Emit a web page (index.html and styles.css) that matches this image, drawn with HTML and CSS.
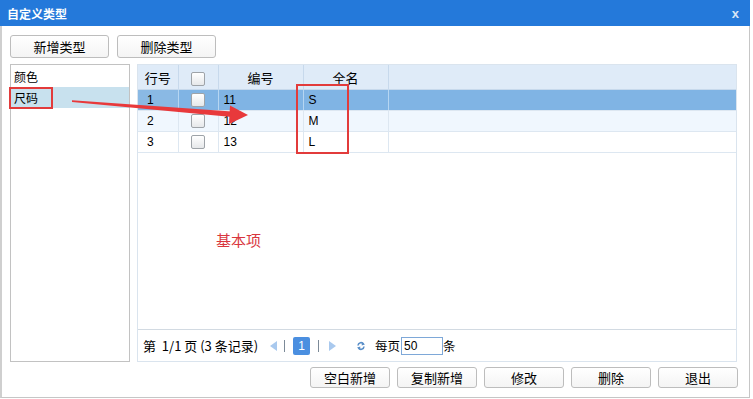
FILE: index.html
```html
<!DOCTYPE html>
<html lang="zh-CN">
<head>
    <meta charset="UTF-8">
    <title>自定义类型</title>
    <link rel="stylesheet" href="styles.css">
</head>
<body>
    <div class="dialog">
        <div class="titlebar">
            <span class="title">自定义类型</span>
            <span class="close">x</span>
        </div>

        <div class="toolbar">
            <button class="btn btn-top">新增类型</button>
            <button class="btn btn-top">删除类型</button>
        </div>

        <div class="main">
            <div class="type-list">
                <div class="type-item">颜色</div>
                <div class="type-item selected">尺码</div>
            </div>

            <div class="grid-panel">
                <div class="grid-body">
                    <table class="grid">
                        <colgroup>
                            <col class="c-no">
                            <col class="c-check">
                            <col class="c-code">
                            <col class="c-name">
                            <col>
                        </colgroup>
                        <thead>
                            <tr>
                                <th>行号</th>
                                <th><span class="check"></span></th>
                                <th>编号</th>
                                <th>全名</th>
                                <th></th>
                            </tr>
                        </thead>
                        <tbody>
                            <tr class="row-selected">
                                <td class="row-no">1</td>
                                <td class="center"><span class="check"></span></td>
                                <td>11</td>
                                <td>S</td>
                                <td></td>
                            </tr>
                            <tr class="row-alt">
                                <td class="row-no">2</td>
                                <td class="center"><span class="check"></span></td>
                                <td>12</td>
                                <td>M</td>
                                <td></td>
                            </tr>
                            <tr>
                                <td class="row-no">3</td>
                                <td class="center"><span class="check"></span></td>
                                <td>13</td>
                                <td>L</td>
                                <td></td>
                            </tr>
                        </tbody>
                    </table>
                </div>

                <div class="pager">
                    <span class="pager-info">第&nbsp; 1/1 页 (3 条记录)</span>
                    <span class="pager-arrow left"></span>
                    <span class="pager-sep"></span>
                    <span class="pager-page">1</span>
                    <span class="pager-sep"></span>
                    <span class="pager-arrow right"></span>
                    <svg class="pager-refresh" width="10" height="10" viewBox="0 0 10 10">
                        <path d="M2 4.5 A3 3 0 0 1 7.6 3.2" fill="none" stroke="#5b8fc8" stroke-width="1.6"/>
                        <path d="M6 1.2 L9 3.4 L5.6 4.6 Z" fill="#5b8fc8"/>
                        <path d="M8 5.5 A3 3 0 0 1 2.4 6.8" fill="none" stroke="#5b8fc8" stroke-width="1.6"/>
                        <path d="M4 8.8 L1 6.6 L4.4 5.4 Z" fill="#5b8fc8"/>
                    </svg>
                    <span class="pager-label">每页</span>
                    <span class="pager-input">50</span>
                    <span class="pager-label">条</span>
                </div>
            </div>
        </div>

        <div class="footer">
            <button class="btn btn-bottom">空白新增</button>
            <button class="btn btn-bottom">复制新增</button>
            <button class="btn btn-bottom">修改</button>
            <button class="btn btn-bottom">删除</button>
            <button class="btn btn-bottom">退出</button>
        </div>

        <!-- annotation layer drawn over the dialog -->
        <svg class="marks" width="750" height="398" viewBox="0 0 750 398">
            <rect x="10" y="88" width="42" height="20" fill="none" stroke="#e23b3b" stroke-width="2"/>
            <rect x="297" y="85" width="51" height="68" fill="none" stroke="#e23b3b" stroke-width="2"/>
            <polygon points="72,100.3 232,111.5 232,117 72,102" fill="#e8393b"/>
            <polygon points="248,115 230,105.5 229,124" fill="#e8393b"/>
        </svg>
        <span class="note">基本项</span>
    </div>
</body>
</html>
```

FILE: styles.css
```css
body {
    margin: 0;
    padding: 0;
    background-color: #ffffff;
    font-family: "Liberation Sans", "Noto Sans CJK SC", sans-serif;
    font-size: 12px;
    color: #000;
}

.dialog {
    position: relative;
    width: 750px;
    height: 398px;
    box-sizing: border-box;
    border: 1px solid #c6c6c6;
    border-top: none;
    border-left: 2px solid #cfcfcf;
    background-color: #fff;
}

.titlebar {
    height: 26px;
    margin-left: -2px;
    margin-right: -1px;
    background-color: #2479da;
    display: flex;
    align-items: center;
    justify-content: space-between;
    padding: 0 11px 0 7px;
    color: #fff;
}

.title {
    font-weight: bold;
    font-size: 12px;
}

.close {
    font-size: 13px;
    color: #d8e6f6;
    font-weight: bold;
}

.btn {
    font-family: "Noto Sans CJK SC", sans-serif;
    font-size: 13px;
    color: #000;
    background: linear-gradient(#ffffff, #f4f4f4);
    border: 1px solid #bdbdbd;
    border-radius: 3px;
    padding: 0;
    margin: 0;
}

.toolbar {
    display: flex;
    gap: 8px;
    padding: 9px 0 0 8px;
}

.btn-top {
    width: 99px;
    height: 23px;
}

.main {
    display: flex;
    gap: 7px;
    margin-top: 6px;
    padding-left: 8px;
}

.type-list {
    width: 120px;
    height: 298px;
    box-sizing: border-box;
    border: 1px solid #c2c2c2;
    padding-top: 1px;
    font-family: "Noto Sans CJK SC", sans-serif;
    font-size: 12px;
}

.type-item {
    height: 21px;
    line-height: 21px;
    padding-left: 3px;
}

.type-item.selected {
    background-color: #c8e1ee;
}

.grid-panel {
    width: 600px;
    height: 298px;
    box-sizing: border-box;
    border: 1px solid #dae4ee;
    display: flex;
    flex-direction: column;
}

.grid-body {
    flex: 1;
}

.grid {
    width: 100%;
    border-collapse: collapse;
    table-layout: fixed;
}

.c-no { width: 40px; }
.c-check { width: 40px; }
.c-code { width: 85px; }
.c-name { width: 85px; }

.grid th {
    height: 24px;
    background-color: #dfebf8;
    font-family: "Noto Sans CJK SC", sans-serif;
    font-weight: normal;
    font-size: 13px;
    border-right: 1px solid #c7d9ec;
    border-bottom: 1px solid #c7d9ec;
    padding: 0;
}

.grid th:last-child {
    border-right: none;
}

.grid td {
    height: 20px;
    padding: 0 0 0 5px;
    border-right: 1px solid #dde7f1;
    border-bottom: 1px solid #dde7f1;
    font-size: 12px;
}

.grid td:last-child {
    border-right: none;
}

.grid td.center {
    text-align: center;
    padding: 0;
}

.grid td.row-no {
    padding-left: 9px;
}

.row-alt td {
    background-color: #f0f7fe;
}

.row-selected td {
    background-color: #80b4e4;
    border-right-color: #b6d6f2;
}

.row-selected td.row-no {
    background-color: #8ab9e4;
}

.check {
    display: inline-block;
    width: 12px;
    height: 12px;
    vertical-align: middle;
    border: 1px solid #9ea3a8;
    border-radius: 2px;
    background: linear-gradient(#ffffff, #e6e8ea);
}

.pager {
    height: 31px;
    border-top: 1px solid #d2dae2;
    display: flex;
    align-items: center;
    padding-left: 5px;
    font-family: "Noto Sans CJK SC", sans-serif;
    font-size: 13px;
}

.pager-info {
    width: 127px;
    white-space: nowrap;
}

.pager-arrow {
    width: 0;
    height: 0;
    border-top: 5px solid transparent;
    border-bottom: 5px solid transparent;
}

.pager-arrow.left {
    border-right: 7px solid #a9c9ee;
    margin-right: 7px;
}

.pager-arrow.right {
    border-left: 7px solid #a9c9ee;
    margin-left: 2px;
    margin-right: 20px;
}

.pager-sep {
    width: 1px;
    height: 12px;
    background-color: #7c8a98;
    margin: 0 8px 0 0;
}

.pager-sep + .pager-page {
    margin-right: 8px;
}

.pager-page {
    width: 17px;
    height: 18px;
    line-height: 18px;
    text-align: center;
    background-color: #4b8fe0;
    border-radius: 2px;
    color: #fff;
    font-family: "Liberation Sans", sans-serif;
    font-size: 12px;
}

.pager-refresh {
    margin-right: 9px;
}

.pager-label {
    font-size: 12.5px;
}

.pager-input {
    width: 38px;
    height: 16px;
    line-height: 16px;
    margin-left: 1px;
    border: 1px solid #7ea8d8;
    padding-left: 2px;
    font-family: "Liberation Sans", sans-serif;
    font-size: 12px;
    box-sizing: content-box;
}

.footer {
    display: flex;
    justify-content: flex-end;
    gap: 7px;
    margin-top: 5px;
    padding-right: 11px;
}

.btn-bottom {
    width: 80px;
    height: 21px;
}

/* annotations drawn on top */
.marks {
    position: absolute;
    left: -2px;
    top: 0;
    pointer-events: none;
}

.note {
    position: absolute;
    left: 214px;
    top: 229px;
    color: #d9363e;
    font-family: "Noto Sans CJK SC", sans-serif;
    font-size: 15px;
}
```
